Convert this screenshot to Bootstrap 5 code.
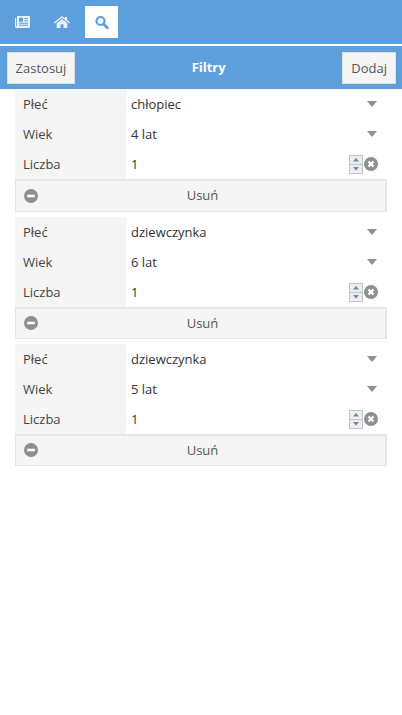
<!doctype html>
<html lang="pl"><head><meta charset="utf-8">
<link rel="stylesheet" href="https://cdn.jsdelivr.net/npm/bootstrap@5.3.0/dist/css/bootstrap.min.css">
<style>
html,body{height:100%;background:#fff}
body{font-family:"Open Sans",sans-serif;font-size:13px;color:#444;overflow:hidden}
.topbar{height:44px;background:#5d9fdd;padding:6px 0 0 6px;gap:6.5px}
.tabitem{width:33px;height:32px}
.tabitem.on{background:#fff}
.divline{height:2px;background:#fff}
.headbar{height:43px;background:#5d9fdd;padding:6px 6px 5px 7px}
.headtitle{color:#fff;font-weight:700;font-size:13px}
.hbtn{height:32px;background:#f5f5f5;border:1px solid #ddd;border-radius:0;color:#555;font-size:13px;padding:0 8px;line-height:30px}
.hbtn:hover{background:#f5f5f5;color:#555;border-color:#ddd}
.applybtn{width:68px;padding:0}
.filtergroup{margin:0 15px 5px 15px}
.frow{height:30px}
.flabel{width:111px;background:#f5f5f5;padding-left:8px;color:#444;font-size:13px;line-height:30px}
.fvalue{padding-left:5px;line-height:30px;font-size:13px;color:#333}
.rmbtn{height:32px;background:#f5f5f5;border-style:solid;border-color:#e6e6e6;border-width:2px 2px 1px 1px;color:#555;font-size:13px;padding:0 0 0 4px}
.leadgroup .rmbtn{height:33px}
.rmicon{left:9px;top:calc(50% - 7px)}
.rmwrap{position:relative;display:flex}
.caretmark{width:0;height:0;border-left:5.500px solid transparent;border-right:5.500px solid transparent;border-top:6px solid #8f8f8f;margin-right:10px}
.spinbox{width:14px;height:19px;margin-right:1px}
.clearmark{margin-right:9px}
</style></head><body>
<div class="topbar d-flex">
 <div class="tabitem d-flex align-items-center justify-content-center">
  <svg width="15" height="12" viewBox="0 0 15 12"><path fill="#e6f1fa" d="M2 0h13v10.500a1.500 1.500 0 0 1-1.500 1.500H1.500A1.500 1.500 0 0 1 0 10.500V2h1.200v8.300h.8z"/><path fill="#5d9fdd" d="M4 1.800h4v4H4zM9.500 2.100H13v1H9.500zM9.500 4.300H13v1H9.500zM4 6.800h9v1H4zM4 8.800h9v1H4z"/></svg>
 </div>
 <div class="tabitem d-flex align-items-center justify-content-center">
  <svg width="16" height="12" viewBox="0 0 16 12"><path fill="#edf3f9" d="M8 0 11 2.400V1h2v3.100L16 6.500l-.8.900L8 1.700.8 7.400 0 6.500zM2.700 7.300 8 3.100l5.300 4.200V12H9.500V8.300h-3V12H2.700z"/></svg>
 </div>
 <div class="tabitem on d-flex align-items-center justify-content-center">
  <svg width="14" height="13" viewBox="0 0 14 13"><circle cx="5.500" cy="5" r="4" fill="none" stroke="#5d9fdd" stroke-width="2.200"/><path d="M8.700 8.200 12.300 11.700" stroke="#5d9fdd" stroke-width="2.800" stroke-linecap="round"/></svg>
 </div>
</div>
<div class="divline"></div>
<div class="headbar d-flex align-items-start justify-content-between">
 <button type="button" class="btn hbtn applybtn">Zastosuj</button>
 <span class="headtitle align-self-center">Filtry</span>
 <button type="button" class="btn hbtn">Dodaj</button>
</div>

<div class="filtergroup leadgroup">
 <div class="frow d-flex"><div class="flabel">Płeć</div><div class="fvalue flex-grow-1 d-flex align-items-center justify-content-between"><span>chłopiec</span><i class="caretmark"></i></div></div>
 <div class="frow d-flex"><div class="flabel">Wiek</div><div class="fvalue flex-grow-1 d-flex align-items-center justify-content-between"><span>4 lat</span><i class="caretmark"></i></div></div>
 <div class="frow d-flex"><div class="flabel">Liczba</div><div class="fvalue flex-grow-1 d-flex align-items-center justify-content-between"><span>1</span>
  <span class="d-flex align-items-center"><svg class="spinbox" viewBox="0 0 14 19"><rect width="14" height="19" fill="#c4c4c4"/><rect x="1" y="1" width="12" height="8" fill="#eceef2"/><rect x="1" y="10" width="12" height="8" fill="#eceef2"/><path fill="#6d7fb5" d="M7 3 10 6.500H4zM7 15.500 4 12h6z"/></svg><svg class="clearmark" width="14" height="14" viewBox="0 0 14 14"><circle cx="7" cy="7" r="7" fill="#8f8f8f"/><path d="M4.500 4.500l5 5M9.500 4.500l-5 5" stroke="#fff" stroke-width="2.400"/></svg></span></div></div>
 <div class="rmwrap"><button type="button" class="btn rmbtn w-100 rounded-0">Usuń</button><svg class="rmicon position-absolute" width="14" height="14" viewBox="0 0 14 14"><circle cx="7" cy="7" r="7" fill="#8f8f8f"/><rect x="3.200" y="5.700" width="7.600" height="2.600" fill="#fff"/></svg></div>
</div>

<div class="filtergroup">
 <div class="frow d-flex"><div class="flabel">Płeć</div><div class="fvalue flex-grow-1 d-flex align-items-center justify-content-between"><span>dziewczynka</span><i class="caretmark"></i></div></div>
 <div class="frow d-flex"><div class="flabel">Wiek</div><div class="fvalue flex-grow-1 d-flex align-items-center justify-content-between"><span>6 lat</span><i class="caretmark"></i></div></div>
 <div class="frow d-flex"><div class="flabel">Liczba</div><div class="fvalue flex-grow-1 d-flex align-items-center justify-content-between"><span>1</span>
  <span class="d-flex align-items-center"><svg class="spinbox" viewBox="0 0 14 19"><rect width="14" height="19" fill="#c4c4c4"/><rect x="1" y="1" width="12" height="8" fill="#eceef2"/><rect x="1" y="10" width="12" height="8" fill="#eceef2"/><path fill="#6d7fb5" d="M7 3 10 6.500H4zM7 15.500 4 12h6z"/></svg><svg class="clearmark" width="14" height="14" viewBox="0 0 14 14"><circle cx="7" cy="7" r="7" fill="#8f8f8f"/><path d="M4.500 4.500l5 5M9.500 4.500l-5 5" stroke="#fff" stroke-width="2.400"/></svg></span></div></div>
 <div class="rmwrap"><button type="button" class="btn rmbtn w-100 rounded-0">Usuń</button><svg class="rmicon position-absolute" width="14" height="14" viewBox="0 0 14 14"><circle cx="7" cy="7" r="7" fill="#8f8f8f"/><rect x="3.200" y="5.700" width="7.600" height="2.600" fill="#fff"/></svg></div>
</div>

<div class="filtergroup">
 <div class="frow d-flex"><div class="flabel">Płeć</div><div class="fvalue flex-grow-1 d-flex align-items-center justify-content-between"><span>dziewczynka</span><i class="caretmark"></i></div></div>
 <div class="frow d-flex"><div class="flabel">Wiek</div><div class="fvalue flex-grow-1 d-flex align-items-center justify-content-between"><span>5 lat</span><i class="caretmark"></i></div></div>
 <div class="frow d-flex"><div class="flabel">Liczba</div><div class="fvalue flex-grow-1 d-flex align-items-center justify-content-between"><span>1</span>
  <span class="d-flex align-items-center"><svg class="spinbox" viewBox="0 0 14 19"><rect width="14" height="19" fill="#c4c4c4"/><rect x="1" y="1" width="12" height="8" fill="#eceef2"/><rect x="1" y="10" width="12" height="8" fill="#eceef2"/><path fill="#6d7fb5" d="M7 3 10 6.500H4zM7 15.500 4 12h6z"/></svg><svg class="clearmark" width="14" height="14" viewBox="0 0 14 14"><circle cx="7" cy="7" r="7" fill="#8f8f8f"/><path d="M4.500 4.500l5 5M9.500 4.500l-5 5" stroke="#fff" stroke-width="2.400"/></svg></span></div></div>
 <div class="rmwrap"><button type="button" class="btn rmbtn w-100 rounded-0">Usuń</button><svg class="rmicon position-absolute" width="14" height="14" viewBox="0 0 14 14"><circle cx="7" cy="7" r="7" fill="#8f8f8f"/><rect x="3.200" y="5.700" width="7.600" height="2.600" fill="#fff"/></svg></div>
</div>
<script src="https://cdn.jsdelivr.net/npm/bootstrap@5.3.0/dist/js/bootstrap.bundle.min.js"></script>
</body></html>
